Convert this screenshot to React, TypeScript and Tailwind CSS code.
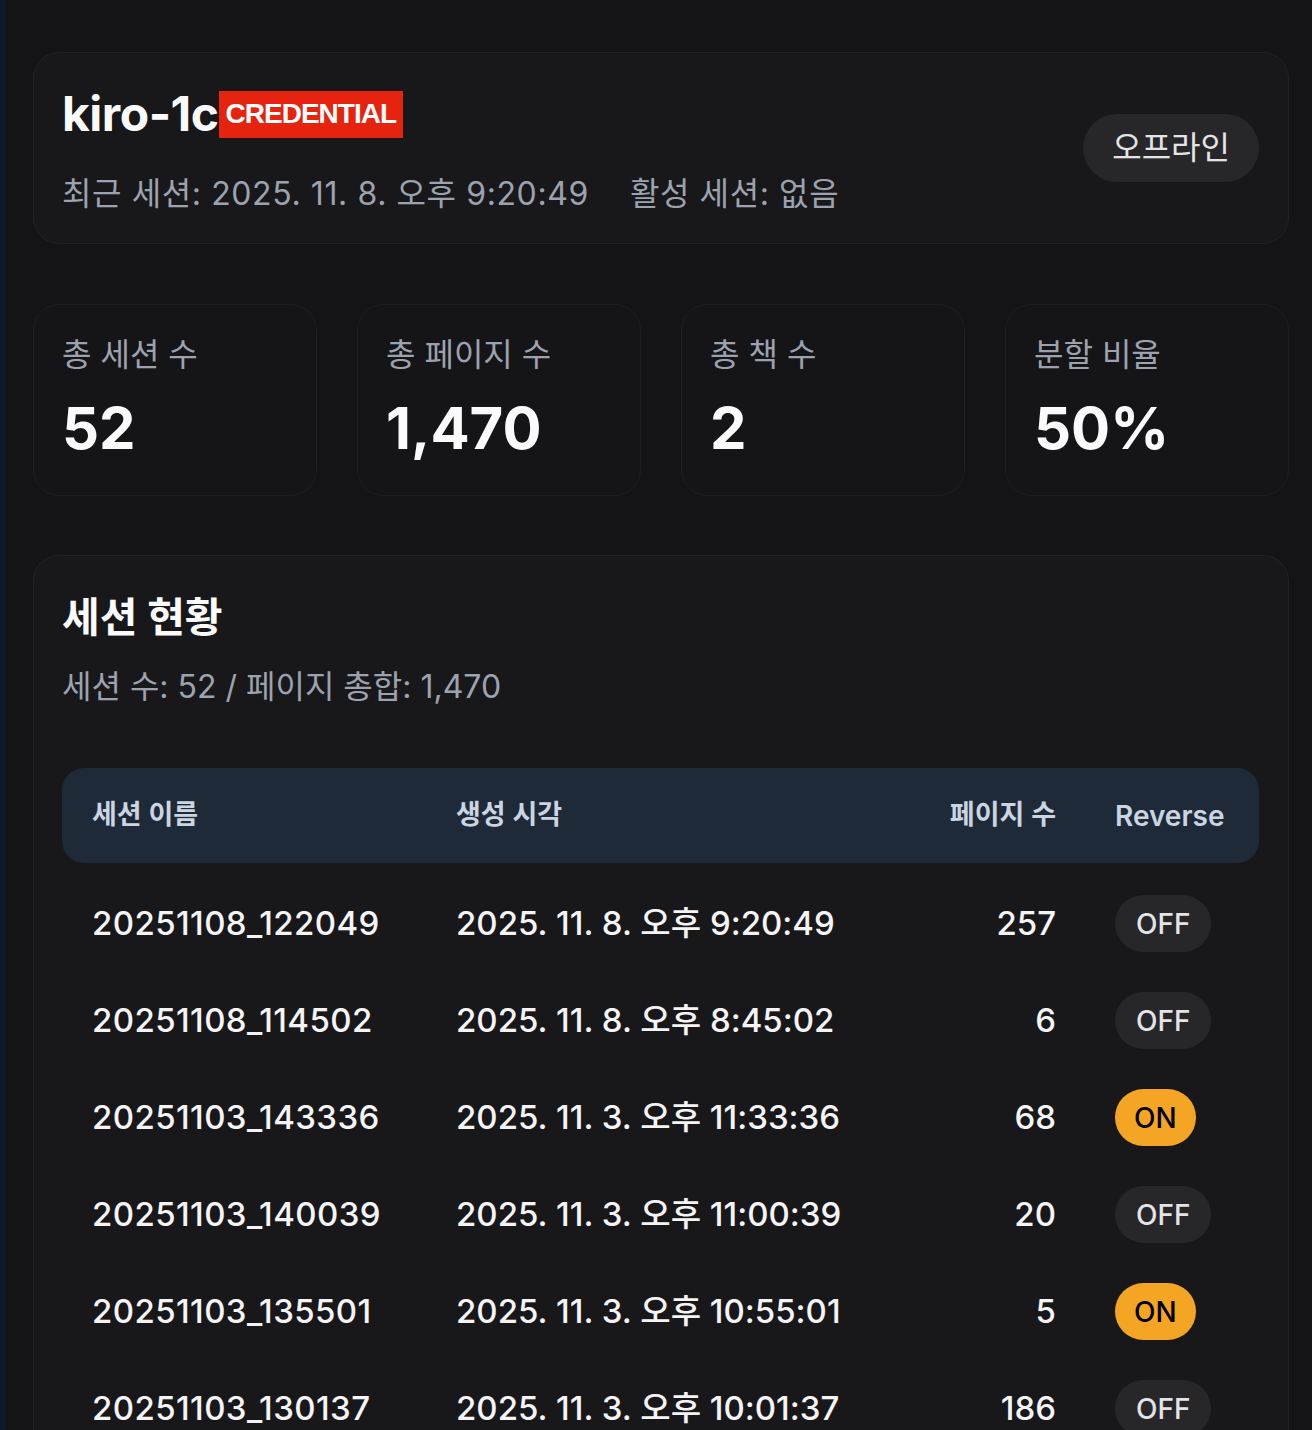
const FONT = { fontFamily: 'Inter, "Noto Sans CJK KR", sans-serif' };

type Row = { name: string; created: string; pages: number; reverse: boolean };

const ROWS: Row[] = [
  { name: '20251108_122049', created: '2025. 11. 8. 오후 9:20:49', pages: 257, reverse: false },
  { name: '20251108_114502', created: '2025. 11. 8. 오후 8:45:02', pages: 6, reverse: false },
  { name: '20251103_143336', created: '2025. 11. 3. 오후 11:33:36', pages: 68, reverse: true },
  { name: '20251103_140039', created: '2025. 11. 3. 오후 11:00:39', pages: 20, reverse: false },
  { name: '20251103_135501', created: '2025. 11. 3. 오후 10:55:01', pages: 5, reverse: true },
  { name: '20251103_130137', created: '2025. 11. 3. 오후 10:01:37', pages: 186, reverse: false },
];

const STATS = [
  { label: '총 세션 수', value: '52' },
  { label: '총 페이지 수', value: '1,470' },
  { label: '총 책 수', value: '2' },
  { label: '분할 비율', value: '50%' },
];

function ReversePill({ on }: { on: boolean }) {
  return on ? (
    <span className="inline-flex h-[57px] items-center rounded-full bg-[#f5a524] px-[19px] text-[28px] font-medium text-black">
      ON
    </span>
  ) : (
    <span className="inline-flex h-[57px] items-center rounded-full bg-[#27272a] px-[21px] text-[28px] font-medium text-[#e4e4e7]">
      OFF
    </span>
  );
}

export default function App() {
  return (
    <div
      style={FONT}
      className="min-h-screen overflow-hidden border-l-[5px] border-[#0e1a2d] bg-[#141417] pl-[28px] pr-[23px] pt-[52px] text-white"
    >
      {/* Header card */}
      <div className="flex h-[192px] items-center justify-between rounded-[26px] border border-[#222226] bg-[#18181b] pl-[28px] pr-[29px]">
        <div className="mt-[8px]">
          <div className="flex items-center">
            <span className="text-[48px] font-bold leading-none tracking-[-0.5px] text-[#fafafa]">kiro-1c</span>
            <span
              style={{ fontFamily: '"Liberation Sans", Arial, sans-serif' }}
              className="flex h-[47px] items-center bg-[#e5230e] px-[7px] text-[28px] font-bold tracking-[-1px] text-white"
            >
              CREDENTIAL
            </span>
          </div>
          <div className="mt-[36px] flex gap-[41px] text-[32px] leading-[40px] tracking-[0.6px] text-[#9ca3af]">
            <span>최근 세션: 2025. 11. 8. 오후 9:20:49</span>
            <span>활성 세션: 없음</span>
          </div>
        </div>
        <span className="flex h-[68px] items-center rounded-full bg-[#27272a] px-[29px] text-[32px] text-[#e4e4e7]">
          오프라인
        </span>
      </div>

      {/* Stat cards */}
      <div className="mt-[60px] grid grid-cols-4 gap-[40px]">
        {STATS.map((s) => (
          <div
            key={s.label}
            className="h-[192px] rounded-[26px] border border-[#1f1f23] bg-[#151518] pl-[28px] pr-[29px] pt-[30px]"
          >
            <div className="text-[32px] leading-[40px] text-[#9ca3af]">{s.label}</div>
            <div className="mt-[21px] text-[58px] font-bold leading-[64px] text-[#fafafa]">{s.value}</div>
          </div>
        ))}
      </div>

      {/* Session list */}
      <div className="mt-[59px] rounded-t-[26px] border border-b-0 border-[#222226] bg-[#18181b] pl-[28px] pr-[29px] pt-[36px] pb-[40px]">
        <h2 className="text-[41px] font-bold leading-[50px] text-[#fafafa]">세션 현황</h2>
        <p className="mt-[25px] text-[32px] leading-[40px] text-[#9ca3af]">세션 수: 52 / 페이지 총합: 1,470</p>

        <div className="mt-[61px]">
          <div className="grid h-[95px] grid-cols-[364px_460px_200px_1fr] items-center rounded-[22px] bg-[#1e2a38] text-[27px] font-semibold text-[#cbd5e1]">
            <span className="pl-[30px]">세션 이름</span>
            <span className="pl-[30px]">생성 시각</span>
            <span className="pr-[30px] text-right">페이지 수</span>
            <span className="pl-[29px] text-[28px]">Reverse</span>
          </div>
          <div className="pt-[12px]">
            {ROWS.map((r) => (
              <div
                key={r.name}
                className="grid h-[97px] grid-cols-[364px_460px_200px_1fr] items-center text-[33px] text-[#f4f4f5]"
              >
                <span className="pl-[30px] font-medium tracking-[0.4px]">{r.name}</span>
                <span className="pl-[30px] font-medium">{r.created}</span>
                <span className="pr-[30px] text-right font-medium">{r.pages}</span>
                <span className="pl-[29px]">
                  <ReversePill on={r.reverse} />
                </span>
              </div>
            ))}
          </div>
        </div>
      </div>
    </div>
  );
}
